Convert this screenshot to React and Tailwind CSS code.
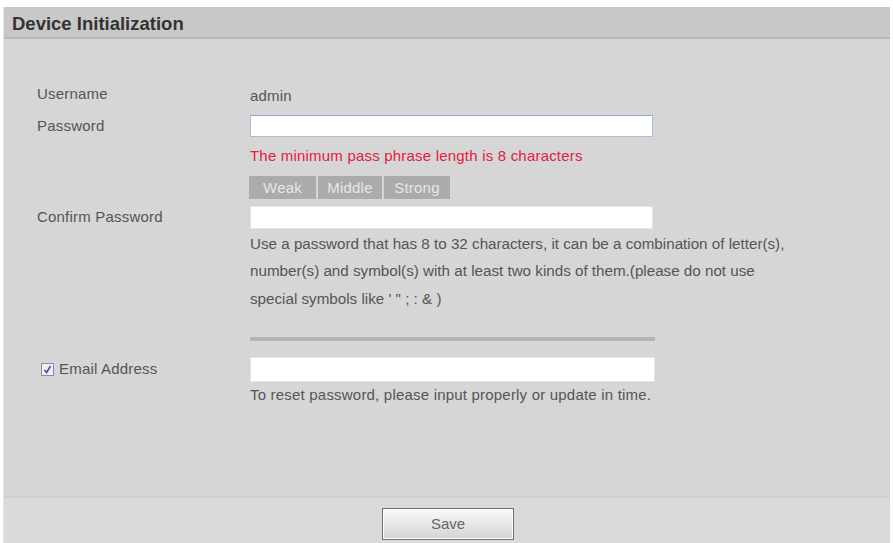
import React from "react";

const font = { fontFamily: '"Liberation Sans", Arial, sans-serif' };

function Row({ label, children, className = "" }) {
  return (
    <div className={"flex " + className}>
      <div className="w-[213px] shrink-0 flex items-center">{label}</div>
      <div className="flex-1">{children}</div>
    </div>
  );
}

export default function App() {
  return (
    <div
      className="w-[893px] h-[543px] bg-white pt-[7px] pl-[3px] pr-[3px] flex flex-col overflow-hidden"
      style={font}
    >
      <div className="flex-1 flex flex-col bg-[#d6d6d6] border-l border-[#e2e2e2]">
        <div className="h-[32px] bg-[#c8c8c8] border-b-2 border-[#b9b9b9] flex items-center pl-[8px] pt-[3px] text-[18.5px] font-bold text-[#333333]">
          Device Initialization
        </div>
        <div className="flex-1 pl-[33px] text-[15px] text-[#555555] tracking-[0.2px]">
          <Row label="Username" className="mt-[46px] h-[18px]">
            <span className="leading-[18px]">admin</span>
          </Row>
          <Row label="Password" className="mt-[12px]">
            <div className="w-[403px] h-[22px] bg-white border border-[#a9bdd6] border-t-[#90a8c8]" />
          </Row>
          <Row label="" className="mt-[9px]">
            <div className="leading-[18px] text-[#e3213c]">
              The minimum pass phrase length is 8 characters
            </div>
          </Row>
          <Row label="" className="mt-[11px]">
            <div className="flex gap-[2px] text-[#e6e6e6] leading-[23px] -ml-[1px]">
              <div className="w-[67px] h-[23px] bg-[#ababab] text-center">Weak</div>
              <div className="w-[64px] h-[23px] bg-[#ababab] text-center">Middle</div>
              <div className="w-[66px] h-[23px] bg-[#ababab] text-center">Strong</div>
            </div>
          </Row>
          <Row label="Confirm Password" className="mt-[7px]">
            <div className="w-[403px] h-[23px] bg-white border border-[#e4e4e4]" />
          </Row>
          <Row label="" className="mt-[1px]">
            <div className="leading-[27.5px] text-[15.2px] tracking-[0px] whitespace-nowrap">
              <div>Use a password that has 8 to 32 characters, it can be a combination of letter(s),</div>
              <div>number(s) and symbol(s) with at least two kinds of them.(please do not use</div>
              <div>special symbols like ' " ; : &amp; )</div>
            </div>
          </Row>
          <Row label="" className="mt-[25px]">
            <div className="w-[405px] h-[4px] bg-[#b3b3b3] rounded-[1px]" />
          </Row>
          <Row
            className="mt-[16px]"
            label={
              <div className="flex items-center gap-[5px] pl-[4px]">
                <div className="w-[13px] h-[13px] border border-[#8c8ca0] bg-[#eeeef6] flex items-center justify-center">
                  <svg width="9" height="9" viewBox="0 0 9 9">
                    <path d="M1.5 5 L3.5 7.5 L7.5 1" stroke="#4b4ba8" strokeWidth="1.6" fill="none" />
                  </svg>
                </div>
                <span>Email Address</span>
              </div>
            }
          >
            <div className="w-[405px] h-[25px] bg-white border border-[#e4e4e4]" />
          </Row>
          <Row label="" className="mt-[4px]">
            <div className="leading-[18px]">
              To reset password, please input properly or update in time.
            </div>
          </Row>
        </div>
        <div className="h-[47px] bg-[#dadada] border-t-2 border-[#d0d0d0] flex justify-center pt-[10px] pl-[2px]">
          <button className="w-[132px] h-[32px] border border-[#6f6f6f] bg-gradient-to-b from-[#fafafa] to-[#d4d4d4] text-[15px] text-[#666666] shadow-[inset_0_0_0_1px_#ffffff]">
            Save
          </button>
        </div>
      </div>
    </div>
  );
}
